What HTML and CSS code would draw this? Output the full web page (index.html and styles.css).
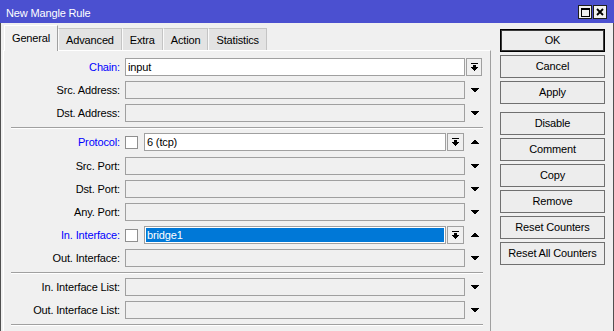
FILE: index.html
```html
<!DOCTYPE html>
<html>
<head>
<meta charset="utf-8">
<link rel="stylesheet" href="styles.css">
</head>
<body>
<div class="window">
  <div class="titlebar">
    <span class="title">New Mangle Rule</span>
    <div class="tb-btns">
      <span class="tb-btn"><svg width="9" height="9" viewBox="0 0 9 9"><path fill-rule="evenodd" d="M0 0h9v9H0z M1 2v6h7V2z"/></svg></span>
      <span class="tb-btn"><svg width="8" height="8" viewBox="0 0 8 8"><path d="M1 1L7 7M7 1L1 7" stroke="#000" stroke-width="1.8" fill="none"/></svg></span>
    </div>
  </div>
  <div class="main">
    <div class="left">
      <div class="tabs">
        <div class="tab active">General</div>
        <div class="tab">Advanced</div>
        <div class="tab">Extra</div>
        <div class="tab">Action</div>
        <div class="tab">Statistics</div>
      </div>
      <div class="panel">
        <div class="row">
          <div class="label blue">Chain:</div>
          <div class="ctrl"><div class="field white">input</div></div>
          <div class="trail"><span class="ddbtn"><svg class="dd" width="7" height="8" viewBox="0 0 7 8"><path d="M0 0h7v1H0z M2 2h3v2H2z M0 4h7v1h-1v1h-1v1h-1v1h-1v-1h-1v-1h-1v-1h-1z"/></svg></span></div>
        </div>
        <div class="row">
          <div class="label">Src. Address:</div>
          <div class="ctrl"><div class="field"></div></div>
          <div class="trail"><svg class="tri" width="8" height="4" viewBox="0 0 8 4"><path d="M0 0h8v1h-1v1h-1v1h-1v1h-2v-1h-1v-1h-1v-1h-1z"/></svg></div>
        </div>
        <div class="row">
          <div class="label">Dst. Address:</div>
          <div class="ctrl"><div class="field"></div></div>
          <div class="trail"><svg class="tri" width="8" height="4" viewBox="0 0 8 4"><path d="M0 0h8v1h-1v1h-1v1h-1v1h-2v-1h-1v-1h-1v-1h-1z"/></svg></div>
        </div>
        <div class="sep"></div>
        <div class="row r-proto">
          <div class="label blue">Protocol:</div>
          <div class="ctrl"><span class="chk"></span><div class="field white pad">6 (tcp)</div><span class="ddbtn small"><svg class="dd" width="7" height="8" viewBox="0 0 7 8"><path d="M0 0h7v1H0z M2 2h3v2H2z M0 4h7v1h-1v1h-1v1h-1v1h-1v-1h-1v-1h-1v-1h-1z"/></svg></span></div>
          <div class="trail"><svg class="tri up" width="8" height="4" viewBox="0 0 8 4"><path d="M0 0h8v1h-1v1h-1v1h-1v1h-2v-1h-1v-1h-1v-1h-1z"/></svg></div>
        </div>
        <div class="row">
          <div class="label">Src. Port:</div>
          <div class="ctrl"><div class="field"></div></div>
          <div class="trail"><svg class="tri" width="8" height="4" viewBox="0 0 8 4"><path d="M0 0h8v1h-1v1h-1v1h-1v1h-2v-1h-1v-1h-1v-1h-1z"/></svg></div>
        </div>
        <div class="row">
          <div class="label">Dst. Port:</div>
          <div class="ctrl"><div class="field"></div></div>
          <div class="trail"><svg class="tri" width="8" height="4" viewBox="0 0 8 4"><path d="M0 0h8v1h-1v1h-1v1h-1v1h-2v-1h-1v-1h-1v-1h-1z"/></svg></div>
        </div>
        <div class="row">
          <div class="label">Any. Port:</div>
          <div class="ctrl"><div class="field"></div></div>
          <div class="trail"><svg class="tri" width="8" height="4" viewBox="0 0 8 4"><path d="M0 0h8v1h-1v1h-1v1h-1v1h-2v-1h-1v-1h-1v-1h-1z"/></svg></div>
        </div>
        <div class="row r-iface">
          <div class="label blue">In. Interface:</div>
          <div class="ctrl"><span class="chk"></span><div class="field sel pad">bridge1</div><span class="ddbtn small"><svg class="dd" width="7" height="8" viewBox="0 0 7 8"><path d="M0 0h7v1H0z M2 2h3v2H2z M0 4h7v1h-1v1h-1v1h-1v1h-1v-1h-1v-1h-1v-1h-1z"/></svg></span></div>
          <div class="trail"><svg class="tri up" width="8" height="4" viewBox="0 0 8 4"><path d="M0 0h8v1h-1v1h-1v1h-1v1h-2v-1h-1v-1h-1v-1h-1z"/></svg></div>
        </div>
        <div class="row">
          <div class="label">Out. Interface:</div>
          <div class="ctrl"><div class="field"></div></div>
          <div class="trail"><svg class="tri" width="8" height="4" viewBox="0 0 8 4"><path d="M0 0h8v1h-1v1h-1v1h-1v1h-2v-1h-1v-1h-1v-1h-1z"/></svg></div>
        </div>
        <div class="sep"></div>
        <div class="row">
          <div class="label">In. Interface List:</div>
          <div class="ctrl"><div class="field"></div></div>
          <div class="trail"><svg class="tri" width="8" height="4" viewBox="0 0 8 4"><path d="M0 0h8v1h-1v1h-1v1h-1v1h-2v-1h-1v-1h-1v-1h-1z"/></svg></div>
        </div>
        <div class="row">
          <div class="label">Out. Interface List:</div>
          <div class="ctrl"><div class="field"></div></div>
          <div class="trail"><svg class="tri" width="8" height="4" viewBox="0 0 8 4"><path d="M0 0h8v1h-1v1h-1v1h-1v1h-2v-1h-1v-1h-1v-1h-1z"/></svg></div>
        </div>
        <div class="sep"></div>
      </div>
    </div>
    <div class="btns">
      <div class="btn ok">OK</div>
      <div class="btn">Cancel</div>
      <div class="btn">Apply</div>
      <div class="btn spaced">Disable</div>
      <div class="btn">Comment</div>
      <div class="btn">Copy</div>
      <div class="btn">Remove</div>
      <div class="btn">Reset Counters</div>
      <div class="btn">Reset All Counters</div>
    </div>
  </div>
</div>
</body>
</html>
```
FILE: styles.css
```css
* { box-sizing: border-box; }
html, body { margin: 0; padding: 0; }
body {
  width: 614px;
  height: 331px;
  overflow: hidden;
  background: #f0f0f0;
  font-family: "Liberation Sans", Arial, sans-serif;
  font-size: 11px;
  letter-spacing: -0.15px;
  color: #000;
}
.window {
  width: 614px;
  height: 331px;
  display: flex;
  flex-direction: column;
}
.titlebar {
  height: 23px;
  flex: none;
  background: #4b50d0;
  display: flex;
  justify-content: space-between;
  align-items: flex-start;
  padding: 0 7px 0 6px;
}
.title {
  color: #fff;
  padding-top: 3px;
  line-height: 20px;
}
.tb-btns {
  display: flex;
  gap: 1px;
  margin-top: 5px;
}
.tb-btn {
  width: 14px;
  height: 14px;
  background: #f0f0f0;
  border: 1px solid #1e1e1e;
  display: flex;
  align-items: center;
  justify-content: center;
}
.main {
  flex: 1;
  min-height: 0;
  display: flex;
  border-left: 1px solid #505050;
  border-right: 1px solid #505050;
}
.left {
  width: 490px;
  padding-left: 2px;
  display: flex;
  flex-direction: column;
}
.tabs {
  display: flex;
  align-items: flex-end;
  height: 27px;
  margin-left: 1px;
  flex: none;
}
.tab {
  height: 22px;
  padding: 1px 7px 0;
  line-height: 20px;
  background: #e3e3e3;
  border: 1px solid #c4c4c4;
  border-bottom: none;
  border-left-color: #fafafa;
  white-space: nowrap;
}
.tab.active {
  position: relative;
  z-index: 1;
  height: 26px;
  margin-bottom: -1px;
  padding: 2px 7px 0 7px;
  background: #f0f0f0;
  border-color: #fff #a0a0a0 transparent #fff;
}
.panel {
  flex: 1;
  border-top: 1px solid #fff;
  border-left: 1px solid #fff;
  border-right: 1px solid #a0a0a0;
  padding-top: 7px;
}
.row {
  display: flex;
  align-items: center;
  height: 18px;
  margin-bottom: 5px;
}
.row.r-proto { margin-bottom: 6px; }
.row.r-iface { margin-top: 1px; }
.label {
  width: 117px;
  flex: none;
  text-align: right;
  padding-right: 1px;
  line-height: 18px;
  white-space: nowrap;
}
.label.blue { color: #0000ff; }
.ctrl {
  width: 340px;
  flex: none;
  margin-left: 4px;
  height: 18px;
  display: flex;
  align-items: center;
}
.trail {
  width: 18px;
  height: 18px;
  flex: none;
  display: flex;
  align-items: center;
  justify-content: center;
}
.field {
  flex: 1;
  height: 18px;
  border: 1px solid #a0a0a0;
  background: #f0f0f0;
  line-height: 16px;
  padding-left: 2px;
  white-space: nowrap;
}
.field.white { background: #fff; }
.field.sel {
  background: #0078d7;
  color: #fff;
  box-shadow: inset 0 0 0 1px #fff;
}
.chk {
  width: 13px;
  height: 13px;
  flex: none;
  border: 1px solid #8f8f8f;
  background: #fff;
  margin-right: 6px;
}
.ddbtn {
  width: 16px;
  height: 18px;
  flex: none;
  border: 1px solid #a0a0a0;
  background: #f0f0f0;
  display: flex;
  align-items: center;
  justify-content: center;
}
.ddbtn.small {
  width: 17px;
  margin-left: 1px;
  margin-right: 1px;
}
.tri.up { transform: scaleY(-1); }
.tri { margin-left: 1px; }
.sep {
  height: 2px;
  border-top: 1px solid #a0a0a0;
  border-bottom: 1px solid #fff;
  margin: 1px 7px 4px 7px;
}
.btns {
  width: 105px;
  margin-left: 9px;
  margin-top: 6px;
  display: flex;
  flex-direction: column;
  gap: 3px;
}
.btn {
  height: 23px;
  border: 1px solid #707070;
  background: #ededed;
  text-align: center;
  line-height: 21px;
  white-space: nowrap;
}
.btn.ok {
  border-color: #000;
  box-shadow: inset 0 0 0 1px #3a3a3a;
}
.btn.spaced { margin-top: 5px; }
```
